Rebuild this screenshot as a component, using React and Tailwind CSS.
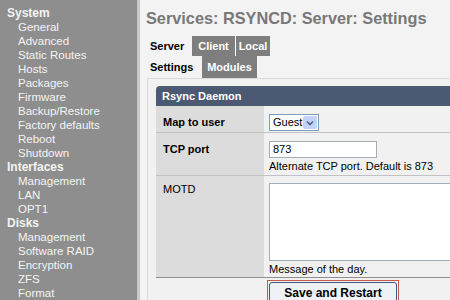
import React from 'react';

const menu = [
  { title: 'System', items: ['General', 'Advanced', 'Static Routes', 'Hosts', 'Packages', 'Firmware', 'Backup/Restore', 'Factory defaults', 'Reboot', 'Shutdown'] },
  { title: 'Interfaces', items: ['Management', 'LAN', 'OPT1'] },
  { title: 'Disks', items: ['Management', 'Software RAID', 'Encryption', 'ZFS', 'Format'] },
];

export default function App() {
  return (
    <div className="w-[450px] h-[300px] overflow-hidden flex bg-[#f3f3f3] font-['Liberation_Sans',Arial,sans-serif]">
      {/* Sidebar */}
      <div className="w-[140px] shrink-0 bg-[#8e8e8e] border-r-[3px] border-[#c9c9c9] pt-[6px] text-[11.5px] leading-[14px] text-[#f4f4f4]">
        {menu.map((group, i) => (
          <div key={i}>
            <div className="pl-[7px] font-bold text-[12px]">{group.title}</div>
            {group.items.map((item, j) => (
              <div key={j} className="pl-[18px]">{item}</div>
            ))}
          </div>
        ))}
      </div>

      {/* Main */}
      <div className="flex-1 min-w-0 pl-[6px]">
        <h1 className="mt-[8px] h-[20px] leading-[20px] text-[16.3px] font-bold text-[#787878] whitespace-nowrap">
          Services: RSYNCD: Server: Settings
        </h1>

        {/* Tabs */}
        <div className="mt-[8px] flex h-[20px] text-[11px] font-bold leading-[20px]">
          <div className="w-[46px] pl-[4px] text-black">Server</div>
          <div className="w-[44px] bg-[#7e7e7e] text-white text-center border-r border-white">Client</div>
          <div className="w-[34px] bg-[#7e7e7e] text-white text-center">Local</div>
        </div>
        <div className="flex h-[22px] text-[11px] font-bold leading-[22px]">
          <div className="w-[56px] pl-[4px] text-black">Settings</div>
          <div className="w-[55px] bg-[#7e7e7e] text-white text-center">Modules</div>
        </div>

        {/* Panel */}
        <div className="ml-[1px] border-t border-l border-[#dadada] bg-[#f1f1f1] pl-[8px] pt-[7px]">
          <div className="h-[20px] rounded-tl-[4px] bg-[#4b5a72] pl-[6px] text-[11px] font-bold leading-[20px] text-white">
            Rsync Daemon
          </div>

          {/* Map to user */}
          <div className="flex h-[27px] border-b border-[#c2c2c2] text-[11px]">
            <div className="w-[108px] shrink-0 bg-[#dcdcdc] pl-[7px] pt-[8px] font-bold text-black">Map to user</div>
            <div className="flex-1 pl-[5px] pt-[8px]">
              <div className="flex h-[17px] w-[50px] items-center border border-[#7f9db9] bg-white">
                <span className="flex-1 pl-[3px] text-[11px] text-black">Guest</span>
                <span className="mr-[1px] flex h-[13px] w-[14px] items-center justify-center rounded-[2px] bg-[#c3d3f7]">
                  <svg width="8" height="6" viewBox="0 0 8 6">
                    <path d="M1 1.5 L4 4.5 L7 1.5" fill="none" stroke="#4d6185" strokeWidth="1.6" />
                  </svg>
                </span>
              </div>
            </div>
          </div>

          {/* TCP port */}
          <div className="flex h-[43px] border-b border-[#c2c2c2] text-[11px]">
            <div className="w-[108px] shrink-0 bg-[#dcdcdc] pl-[7px] pt-[8px] font-bold text-black">TCP port</div>
            <div className="flex-1 pl-[5px] pt-[8px]">
              <div className="h-[17px] w-[108px] border border-[#a5acb5] bg-white pl-[3px] leading-[15px] text-black">873</div>
              <div className="mt-[1px] leading-[14px] text-black whitespace-nowrap">Alternate TCP port. Default is 873</div>
            </div>
          </div>

          {/* MOTD */}
          <div className="flex h-[102px] border-b border-[#8e8e8e] text-[11px]">
            <div className="w-[108px] shrink-0 bg-[#dcdcdc] pl-[7px] pt-[5px] text-black">MOTD</div>
            <div className="flex-1 pl-[5px] pt-[7px]">
              <div className="h-[78px] w-full border border-[#a5acb5] border-r-0 bg-white"></div>
              <div className="mt-[1px] leading-[14px] text-black">Message of the day.</div>
            </div>
          </div>

          {/* Save */}
          <div className="flex pt-[2px]">
            <div className="w-[111px] shrink-0"></div>
            <div className="border border-[#c45a4a] p-[1px]">
              <button className="h-[20px] w-[128px] rounded-[3px] border border-[#3c5a86] bg-[#eef2f7] pt-[1px] text-[12px] font-bold leading-[14px] align-top text-black">
                Save and Restart
              </button>
            </div>
          </div>
        </div>
      </div>
    </div>
  );
}
